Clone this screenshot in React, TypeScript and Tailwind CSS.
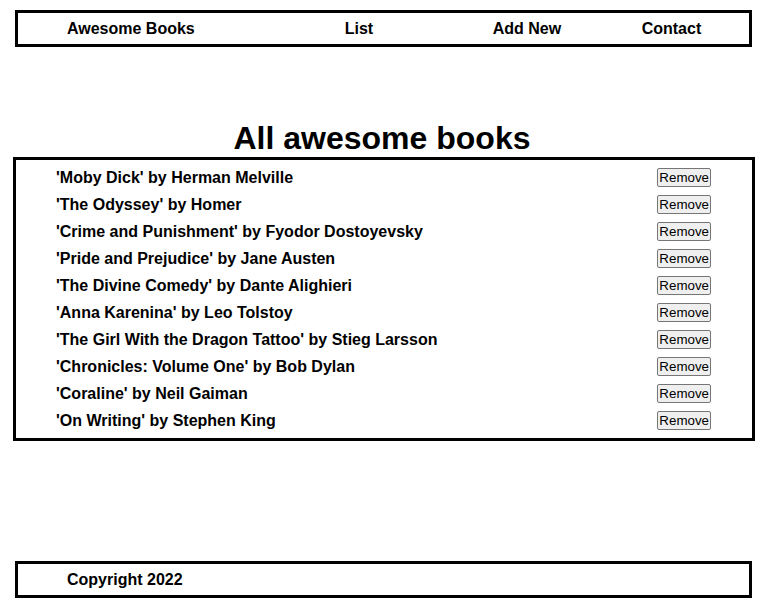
const books = [
  { title: "Moby Dick", author: "Herman Melville" },
  { title: "The Odyssey", author: "Homer" },
  { title: "Crime and Punishment", author: "Fyodor Dostoyevsky" },
  { title: "Pride and Prejudice", author: "Jane Austen" },
  { title: "The Divine Comedy", author: "Dante Alighieri" },
  { title: "Anna Karenina", author: "Leo Tolstoy" },
  { title: "The Girl With the Dragon Tattoo", author: "Stieg Larsson" },
  { title: "Chronicles: Volume One", author: "Bob Dylan" },
  { title: "Coraline", author: "Neil Gaiman" },
  { title: "On Writing", author: "Stephen King" },
];

export default function App() {
  return (
    <div className="min-h-[616px] w-[764px] bg-white text-black font-['Liberation_Sans',Arial,sans-serif]">
      <header className="ml-[15px] pt-[10px]">
        <nav className="flex h-[37px] w-[737px] items-center border-[3px] border-black pl-[49px] text-base font-bold leading-[18px]">
          <span>Awesome Books</span>
          <ul className="flex">
            <li className="ml-[150px]">List</li>
            <li className="ml-[119.5px]">Add New</li>
            <li className="ml-[80.5px]">Contact</li>
          </ul>
        </nav>
      </header>

      <main className="mt-[73px]">
        <h1 className="text-center text-[32px] font-bold leading-[37px]">All awesome books</h1>
        <ul className="ml-[13px] flex w-[742px] flex-col gap-[8px] border-[3px] border-black pl-[40px] pr-[41px] py-[8px]">
          {books.map((b) => (
            <li key={b.title} className="flex h-[19px] items-center justify-between text-base font-bold leading-[18px]">
              <span>
                '{b.title}' by {b.author}
              </span>
              <button className="h-[19px] rounded-[2px] border border-[#767676] bg-[#efefef] px-[1px] text-[13.33px] font-normal leading-[15px]">
                Remove
              </button>
            </li>
          ))}
        </ul>
      </main>

      <footer className="ml-[15px] mt-[120px]">
        <div className="flex h-[37px] w-[737px] items-center border-[3px] border-black pl-[49px] text-base font-bold leading-[18px]">
          Copyright 2022
        </div>
      </footer>
    </div>
  );
}
